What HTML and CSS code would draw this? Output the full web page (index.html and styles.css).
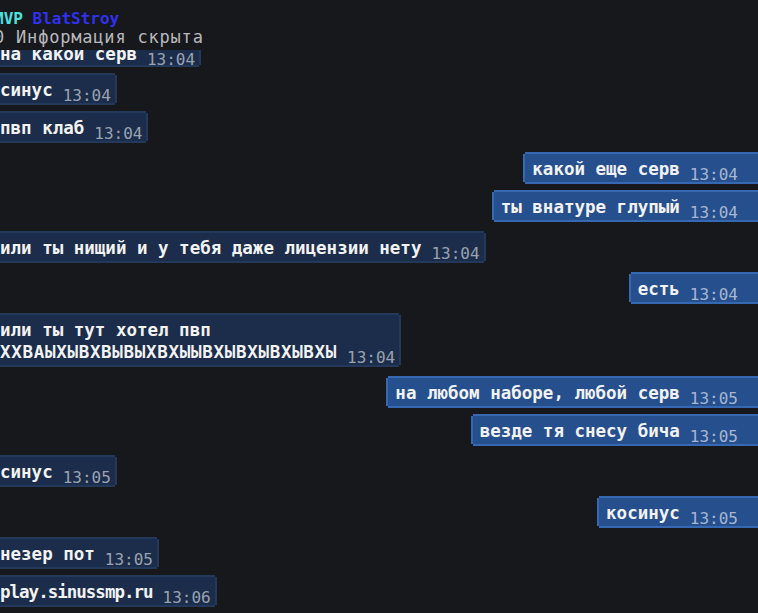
FILE: index.html
```html
<!DOCTYPE html>
<html lang="ru">
<head>
<meta charset="utf-8">
<title>Чат</title>
<link rel="stylesheet" href="styles.css">
</head>
<body>
<div class="screen">
  <header class="head">
    <div class="head-name"><span class="rank">MVP</span> <span class="nick">BlatStroy</span></div>
    <div class="head-info">0 Информация скрыта</div>
  </header>
  <main class="chat">
    <div class="msg in first"><span class="txt">на какой серв</span><span class="time">13:04</span></div>
    <div class="msg in"><span class="txt">синус</span><span class="time">13:04</span></div>
    <div class="msg in"><span class="txt">пвп клаб</span><span class="time">13:04</span></div>
    <div class="msg out"><span class="txt">какой еще серв</span><span class="time">13:04</span></div>
    <div class="msg out"><span class="txt">ты внатуре глупый</span><span class="time">13:04</span></div>
    <div class="msg in"><span class="txt">или ты нищий и у тебя даже лицензии нету</span><span class="time">13:04</span></div>
    <div class="msg out"><span class="txt">есть</span><span class="time">13:04</span></div>
    <div class="msg in"><span class="txt">или ты тут хотел пвп<br><span class="caps">ХХВАЫХЫВХВЫВЫХВХЫЫВХЫВХЫВХЫВХЫ</span></span><span class="time">13:04</span></div>
    <div class="msg out"><span class="txt">на любом наборе, любой серв</span><span class="time">13:05</span></div>
    <div class="msg out"><span class="txt">везде тя снесу бича</span><span class="time">13:05</span></div>
    <div class="msg in"><span class="txt">синус</span><span class="time">13:05</span></div>
    <div class="msg out"><span class="txt">косинус</span><span class="time">13:05</span></div>
    <div class="msg in"><span class="txt">незер пот</span><span class="time">13:05</span></div>
    <div class="msg in"><span class="txt latin">play.sinussmp.ru</span><span class="time">13:06</span></div>
  </main>
</div>
</body>
</html>
```

FILE: styles.css
```css
html, body {
  margin: 0;
  padding: 0;
  background: #17181c;
}

.screen {
  width: 758px;
  height: 613px;
  overflow: hidden;
  display: flex;
  flex-direction: column;
  font-family: "DejaVu Sans Mono", "Liberation Mono", monospace;
  color: #f2f2f2;
}

.head {
  box-sizing: border-box;
  height: 50px;
  padding-top: 10px;
  flex: none;
}

.head-name {
  font-size: 16px;
  line-height: 18px;
  font-weight: bold;
  margin-left: -6px;
  white-space: nowrap;
}

.rank { color: #4fe0e0; }
.nick { color: #3030ee; }

.head-info {
  font-size: 17px;
  line-height: 18px;
  letter-spacing: 0.8px;
  color: #b9b9bd;
  margin-left: -6px;
  white-space: nowrap;
}

.chat {
  flex: 1;
  min-height: 0;
  overflow: hidden;
  display: flex;
  flex-direction: column;
}

.msg {
  display: flex;
  align-items: flex-end;
  gap: 10px;
  margin-top: 13px;
  padding: 4px 4px 2px 13px;
  white-space: nowrap;
}

.msg.in + .msg.in,
.msg.out + .msg.out {
  margin-top: 10px;
}

.msg.in {
  align-self: flex-start;
  margin-left: -13px;
  background: #1b2d4a;
  box-shadow: 2px 0 0 #22395c, -2px 0 0 #22395c, 0 2px 0 #22395c, 0 -2px 0 #22395c;
}

.msg.out {
  align-self: flex-end;
  margin-right: -12px;
  padding-left: 7px;
  padding-right: 32px;
  background: #264f8e;
  box-shadow: 2px 0 0 #3768b2, -2px 0 0 #3768b2, 0 2px 0 #3768b2, 0 -2px 0 #3768b2;
}

.msg.first {
  margin-top: -13px;
  padding-top: 6px;
  padding-bottom: 0;
}

.txt {
  font-size: 17.5px;
  line-height: 22px;
  font-weight: bold;
}

.caps {
  letter-spacing: 0.7px;
}

.latin {
  letter-spacing: -1px;
}

.time {
  font-size: 16px;
  line-height: 11px;
  color: #9aa2b1;
}

.msg.out .time {
  color: #a8b6cf;
}
```
